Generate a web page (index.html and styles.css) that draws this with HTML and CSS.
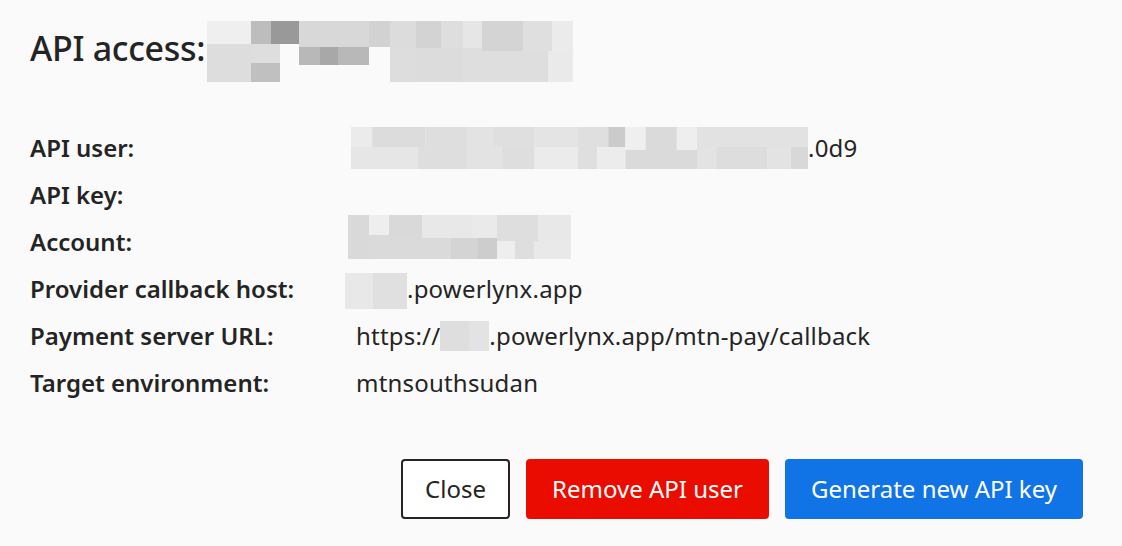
FILE: index.html
```html
<!DOCTYPE html>
<html lang="en">
<head>
<meta charset="utf-8">
<title>API access</title>
<link rel="stylesheet" href="styles.css">
</head>
<body>
<div class="dialog">
  <div class="title-row">
    <h1 class="title">API access:</h1>
    <svg class="redact redact-title" width="366" height="61" viewBox="0 0 366 61" aria-hidden="true">
      <rect x="0" y="0" width="44" height="23" fill="#efefef"/>
      <rect x="44" y="0" width="20" height="23" fill="#bdbdbd"/>
      <rect x="64" y="0" width="28" height="23" fill="#999999"/>
      <rect x="92" y="0" width="70" height="26" fill="#d8d8d8"/>
      <rect x="162" y="0" width="21" height="26" fill="#d2d2d2"/>
      <rect x="183" y="0" width="26" height="26" fill="#dcdcdc"/>
      <rect x="209" y="0" width="25" height="27" fill="#d3d3d3"/>
      <rect x="234" y="0" width="22" height="27" fill="#dedede"/>
      <rect x="256" y="0" width="19" height="27" fill="#e6e6e6"/>
      <rect x="275" y="0" width="41" height="30" fill="#d4d4d4"/>
      <rect x="316" y="0" width="29" height="30" fill="#dfdfdf"/>
      <rect x="345" y="0" width="21" height="30" fill="#ebebeb"/>
      <rect x="0" y="23" width="44" height="38" fill="#dddddd"/>
      <rect x="44" y="23" width="29" height="19" fill="#dedede"/>
      <rect x="44" y="42" width="29" height="19" fill="#c0c0c0"/>
      <rect x="92" y="26" width="21" height="18" fill="#b8b8b8"/>
      <rect x="113" y="26" width="18" height="18" fill="#a8a8a8"/>
      <rect x="131" y="26" width="31" height="18" fill="#b8b8b8"/>
      <rect x="183" y="26" width="26" height="35" fill="#dddddd"/>
      <rect x="209" y="27" width="47" height="34" fill="#dcdcdc"/>
      <rect x="256" y="27" width="19" height="34" fill="#dedede"/>
      <rect x="275" y="30" width="66" height="31" fill="#dedede"/>
      <rect x="341" y="30" width="25" height="31" fill="#eaeaea"/>
    </svg>
  </div>

  <div class="fields">
    <div class="label">API user:</div>
    <div class="value">
      <svg class="redact redact-user" width="457" height="42" viewBox="0 0 453 42" preserveAspectRatio="none" aria-hidden="true">
        <rect x="0" y="0" width="21" height="20" fill="#ebebeb"/>
        <rect x="21" y="0" width="53" height="20" fill="#dcdcdc"/>
        <rect x="74" y="0" width="41" height="20" fill="#dedede"/>
        <rect x="115" y="0" width="25" height="20" fill="#e3e3e3"/>
        <rect x="140" y="0" width="42" height="20" fill="#dfdfdf"/>
        <rect x="182" y="0" width="43" height="20" fill="#e4e4e4"/>
        <rect x="225" y="0" width="30" height="20" fill="#dfdfdf"/>
        <rect x="255" y="0" width="17" height="20" fill="#cbcbcb"/>
        <rect x="272" y="0" width="20" height="23" fill="#efefef"/>
        <rect x="292" y="0" width="31" height="23" fill="#dadada"/>
        <rect x="323" y="0" width="20" height="23" fill="#eeeeee"/>
        <rect x="343" y="0" width="110" height="20" fill="#e2e2e2"/>
        <rect x="0" y="20" width="66" height="22" fill="#e6e6e6"/>
        <rect x="66" y="20" width="49" height="22" fill="#dedede"/>
        <rect x="115" y="20" width="34" height="22" fill="#e3e3e3"/>
        <rect x="149" y="20" width="33" height="22" fill="#dedede"/>
        <rect x="182" y="20" width="43" height="22" fill="#ebebeb"/>
        <rect x="225" y="20" width="19" height="22" fill="#dfdfdf"/>
        <rect x="244" y="20" width="28" height="22" fill="#ececec"/>
        <rect x="272" y="23" width="71" height="19" fill="#dadada"/>
        <rect x="343" y="20" width="19" height="22" fill="#e3e3e3"/>
        <rect x="362" y="20" width="51" height="22" fill="#dddddd"/>
        <rect x="413" y="20" width="23" height="22" fill="#e3e3e3"/>
        <rect x="436" y="20" width="17" height="22" fill="#d8d8d8"/>
      </svg><span>.0d9</span>
    </div>

    <div class="label">API key:</div>
    <div class="value"></div>

    <div class="label">Account:</div>
    <div class="value">
      <svg class="redact redact-account" width="223" height="44" viewBox="0 0 223 44" aria-hidden="true">
        <rect x="0" y="0" width="21" height="44" fill="#d9d9d9"/>
        <rect x="21" y="0" width="20" height="20" fill="#eeeeee"/>
        <rect x="21" y="20" width="20" height="24" fill="#dadada"/>
        <rect x="41" y="0" width="33" height="23" fill="#d9d9d9"/>
        <rect x="74" y="0" width="50" height="23" fill="#e8e8e8"/>
        <rect x="124" y="0" width="25" height="23" fill="#eaeaea"/>
        <rect x="149" y="0" width="41" height="26" fill="#dedede"/>
        <rect x="190" y="0" width="33" height="26" fill="#e8e8e8"/>
        <rect x="41" y="23" width="62" height="21" fill="#dadada"/>
        <rect x="103" y="23" width="27" height="21" fill="#d4d4d4"/>
        <rect x="130" y="23" width="19" height="21" fill="#cdcdcd"/>
        <rect x="149" y="26" width="18" height="18" fill="#eeeeee"/>
        <rect x="167" y="26" width="19" height="18" fill="#dedede"/>
        <rect x="186" y="26" width="37" height="18" fill="#e9e9e9"/>
      </svg>
    </div>

    <div class="label">Provider callback host:</div>
    <div class="value">
      <svg class="redact redact-host" width="62" height="36" viewBox="0 0 62 36" aria-hidden="true">
        <rect x="0" y="0" width="28" height="36" fill="#e8e8e8"/>
        <rect x="28" y="0" width="34" height="36" fill="#e0e0e0"/>
      </svg><span>.powerlynx.app</span>
    </div>

    <div class="label">Payment server URL:</div>
    <div class="value">
      <span>https://</span><svg class="redact redact-url" width="49" height="30" viewBox="0 0 49 30" aria-hidden="true">
        <rect x="0" y="0" width="29" height="30" fill="#dedede"/>
        <rect x="29" y="0" width="20" height="30" fill="#e3e3e3"/>
      </svg><span>.powerlynx.app/mtn-pay/callback</span>
    </div>

    <div class="label">Target environment:</div>
    <div class="value"><span>mtnsouthsudan</span></div>
  </div>

  <div class="actions">
    <button class="btn btn-close" type="button">Close</button>
    <button class="btn btn-danger" type="button">Remove API user</button>
    <button class="btn btn-primary" type="button">Generate new API key</button>
  </div>
</div>
</body>
</html>
```

FILE: styles.css
```css
html, body {
  margin: 0;
  padding: 0;
  background: #fafafa;
}

body {
  font-family: "Noto Sans", "Open Sans", "Liberation Sans", sans-serif;
  color: #242424;
  width: 1122px;
  height: 546px;
  overflow: hidden;
}

.dialog {
  box-sizing: border-box;
  height: 546px;
  padding: 21px 39px 0 30px;
  display: flex;
  flex-direction: column;
}

.title-row {
  display: flex;
  align-items: center;
  height: 61px;
}

.title {
  margin: 0 2px 7px 0;
  font-size: 34px;
  line-height: 40px;
  font-weight: 500;
  letter-spacing: -0.3px;
}

.redact {
  display: block;
  flex: none;
}

.fields {
  margin-top: 42px;
  display: grid;
  grid-template-columns: 326px 1fr;
  grid-auto-rows: 47px;
  align-items: center;
}

.label {
  font-size: 24px;
  font-weight: 600;
  line-height: 30px;
}

.value {
  display: flex;
  align-items: center;
  font-size: 24px;
  line-height: 30px;
  letter-spacing: 0.2px;
  white-space: nowrap;
}

.redact-user { margin-left: -5px; }
.redact-account { margin-left: -8px; margin-bottom: 10px; }
.redact-host { margin-left: -11px; margin-top: 4px; }
.redact-url { margin-top: 0; }

.actions {
  margin-top: 53px;
  display: flex;
  justify-content: flex-end;
  gap: 16px;
}

.btn {
  height: 60px;
  box-sizing: border-box;
  padding: 0 24px;
  border-radius: 4px;
  font-family: inherit;
  font-size: 24px;
  line-height: 1;
  border: 2px solid transparent;
  color: #fff;
}

.btn-close {
  padding: 0 22px;
  background: #ffffff;
  border-color: #242424;
  color: #242424;
}

.btn-danger {
  background: #eb0c00;
  border-color: #eb0c00;
}

.btn-primary {
  background: #1174e6;
  border-color: #1174e6;
}
```
